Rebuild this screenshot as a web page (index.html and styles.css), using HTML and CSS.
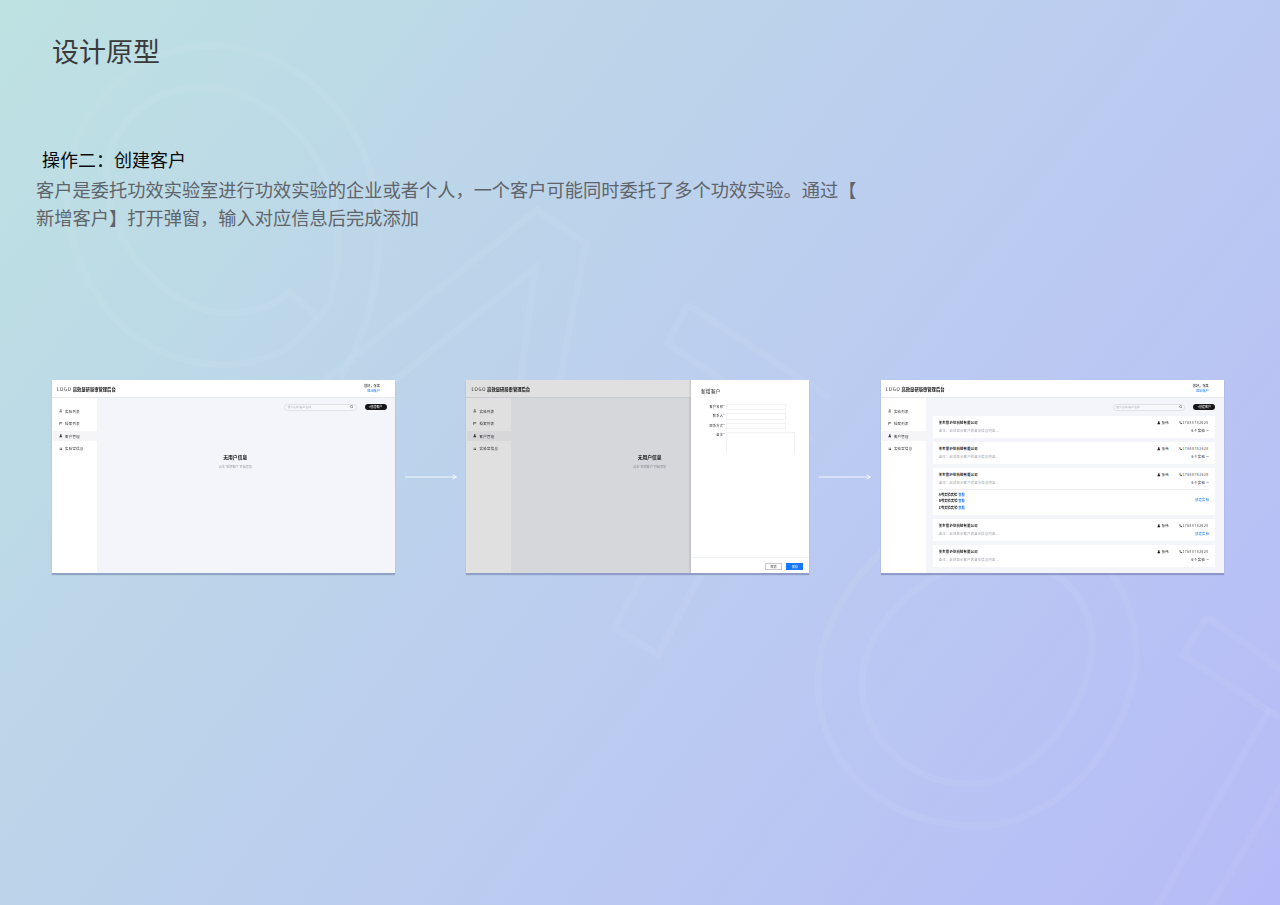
FILE: index.html
```html
<!DOCTYPE html>
<html lang="zh-CN">
<head>
<meta charset="utf-8">
<title>设计原型</title>
<link rel="stylesheet" href="styles.css">
</head>
<body>
<svg class="decor" viewBox="0 0 1280 905" aria-hidden="true">
  <g class="decor-lines">
    <path d="M318 318 L292 345 C250 372 190 372 140 340 C85 300 58 230 70 165 C84 90 150 42 220 46 C300 52 372 120 378 215 C382 270 370 330 340 378"/>
    <path d="M318 318 L290 292 C262 316 215 322 175 296 C128 264 100 210 108 160 C118 112 165 82 215 88 C280 96 335 160 338 230 C340 270 330 310 318 318"/>
    <path d="M300 400 L537 210 L586 243 L552 420"/>
    <path d="M395 380 L535 268 L518 400"/>
    <path d="M688 305 L667 343 L812 440 M688 305 L830 398"/>
    <path d="M708 560 L658 655 L615 628 L655 550"/>
    <path d="M1000 510 C1090 520 1140 590 1136 660 C1130 740 1060 828 972 826 C880 824 816 760 818 680 C820 600 900 500 1000 510Z"/>
    <path d="M1000 560 C1060 560 1094 600 1092 650 C1088 710 1030 786 968 784 C900 782 860 730 862 680 C866 620 930 560 1000 560Z"/>
    <path d="M1207 617 L1183 655 L1280 718 M1207 617 L1285 672"/>
    <path d="M1270 708 L1155 910 M1285 780 L1208 910"/>
  </g>
</svg>

<svg class="defs" aria-hidden="true">
  <symbol id="i-doc" viewBox="0 0 10 10"><circle cx="5" cy="3" r="2" fill="none" stroke="currentColor" stroke-width="1.2"/><path d="M1 9.2h8M2 9V7h6v2" fill="none" stroke="currentColor" stroke-width="1.2"/></symbol>
  <symbol id="i-file" viewBox="0 0 10 10"><path d="M1 9V1.5h8M3 1.5V6M5 1.5V4M7.5 1.5V5" fill="none" stroke="currentColor" stroke-width="1.2"/></symbol>
  <symbol id="i-user" viewBox="0 0 10 10"><circle cx="5" cy="3" r="2.4" fill="currentColor"/><path d="M.8 9.6c0-3 2-3.8 4.2-3.8s4.200.8 4.200 3.800z" fill="currentColor"/></symbol>
  <symbol id="i-grid" viewBox="0 0 10 10"><path d="M2 2h2.500v2.500H2zM5.500 2H8v2.500H5.500zM2 5.500h2.500V8H2zM5.500 5.500H8V8H5.500z" fill="currentColor"/></symbol>
  <symbol id="i-search" viewBox="0 0 10 10"><circle cx="4.500" cy="4.500" r="3.200" fill="none" stroke="currentColor" stroke-width="1.300"/><path d="M7 7l2.200 2.200" stroke="currentColor" stroke-width="1.300"/></symbol>
  <symbol id="i-phone" viewBox="0 0 10 10"><path d="M1.500 1l2-.5 1.200 2.500-1.200 1c.5 1 1.300 1.800 2.300 2.300l1-1.200L9.300 7l-.5 2C4.500 9.500.6 5.500 1.500 1z" fill="currentColor"/></symbol>
  <symbol id="i-down" viewBox="0 0 10 10"><path d="M1.500 3.200L5 6.800l3.500-3.600" fill="none" stroke="currentColor" stroke-width="1.300"/></symbol>
  <symbol id="i-up" viewBox="0 0 10 10"><path d="M1.500 6.800L5 3.200l3.500 3.600" fill="none" stroke="currentColor" stroke-width="1.300"/></symbol>
</svg>

<h1 class="page-title">设计原型</h1>
<h2 class="step-title">操作二：创建客户</h2>
<p class="step-desc">客户是委托功效实验室进行功效实验的企业或者个人，一个客户可能同时委托了多个功效实验。通过【新增客户】打开弹窗，输入对应信息后完成添加</p>

<section class="stage">

  <!-- 画面一：空状态 -->
  <div class="win">
    <header class="win-head">
      <span class="brand"><b class="logo">LOGO</b> 高效量研局审管理后台</span>
      <span class="account"><span>您好，张某</span><a>退出账户</a></span>
    </header>
    <div class="win-body">
      <nav class="side">
        <a class="nav"><svg class="ico"><use href="#i-doc"/></svg>实验列表</a>
        <a class="nav"><svg class="ico"><use href="#i-file"/></svg>档案列表</a>
        <a class="nav on"><svg class="ico"><use href="#i-user"/></svg>客户管理</a>
        <a class="nav"><svg class="ico"><use href="#i-grid"/></svg>实验室信息</a>
      </nav>
      <main class="main">
        <div class="tools">
          <div class="search"><span>搜索名称/客户名称</span><svg class="ico"><use href="#i-search"/></svg></div>
          <div class="add">+创建客户</div>
        </div>
        <div class="empty"><strong>无用户信息</strong><span>点击"新增客户"开始添加</span></div>
      </main>
    </div>
  </div>

  <div class="arrow"><svg viewBox="0 0 52 6"><path d="M0 3h51M47.500 .8L51.500 3l-4 2.200"/></svg></div>

  <!-- 画面二：新增抽屉 -->
  <div class="win">
    <header class="win-head">
      <span class="brand"><b class="logo">LOGO</b> 高效量研局审管理后台</span>
      <span class="account"><span>您好，张某</span><a>退出账户</a></span>
    </header>
    <div class="win-body">
      <nav class="side">
        <a class="nav"><svg class="ico"><use href="#i-doc"/></svg>实验列表</a>
        <a class="nav"><svg class="ico"><use href="#i-file"/></svg>档案列表</a>
        <a class="nav on"><svg class="ico"><use href="#i-user"/></svg>客户管理</a>
        <a class="nav"><svg class="ico"><use href="#i-grid"/></svg>实验室信息</a>
      </nav>
      <main class="main">
        <div class="tools"></div>
        <div class="empty"><strong>无用户信息</strong><span>点击"新增客户"开始添加</span></div>
      </main>
    </div>
    <div class="mask"></div>
    <aside class="drawer">
      <div class="drawer-title">新增客户</div>
      <div class="form">
        <label class="field"><span>客户名称*</span><i class="input"></i></label>
        <label class="field"><span>联系人*</span><i class="input"></i></label>
        <label class="field"><span>联系方式*</span><i class="input"></i></label>
        <label class="field"><span>备注*</span><i class="textarea"></i></label>
      </div>
      <div class="drawer-foot"><span class="btn">取消</span><span class="btn primary">保存</span></div>
    </aside>
  </div>

  <div class="arrow"><svg viewBox="0 0 52 6"><path d="M0 3h51M47.500 .8L51.500 3l-4 2.200"/></svg></div>

  <!-- 画面三：客户列表 -->
  <div class="win">
    <header class="win-head">
      <span class="brand"><b class="logo">LOGO</b> 高效量研局审管理后台</span>
      <span class="account"><span>您好，张某</span><a>退出账户</a></span>
    </header>
    <div class="win-body">
      <nav class="side">
        <a class="nav"><svg class="ico"><use href="#i-doc"/></svg>实验列表</a>
        <a class="nav"><svg class="ico"><use href="#i-file"/></svg>档案列表</a>
        <a class="nav on"><svg class="ico"><use href="#i-user"/></svg>客户管理</a>
        <a class="nav"><svg class="ico"><use href="#i-grid"/></svg>实验室信息</a>
      </nav>
      <main class="main">
        <div class="tools">
          <div class="search"><span>搜索名称/客户名称</span><svg class="ico"><use href="#i-search"/></svg></div>
          <div class="add">+创建客户</div>
        </div>
        <div class="cards">
          <article class="card">
            <div class="row"><b class="co">美东雷护肤科技有限公司</b><span class="who"><svg class="ico"><use href="#i-user"/></svg>张伟</span><span class="tel"><svg class="ico"><use href="#i-phone"/></svg>17688782628</span></div>
            <div class="row sub"><span class="note">备注：此处显示客户的备注信息内容...</span><span class="more">6个实验<svg class="ico"><use href="#i-down"/></svg></span></div>
          </article>
          <article class="card">
            <div class="row"><b class="co">美东雷护肤科技有限公司</b><span class="who"><svg class="ico"><use href="#i-user"/></svg>张伟</span><span class="tel"><svg class="ico"><use href="#i-phone"/></svg>17688782628</span></div>
            <div class="row sub"><span class="note">备注：此处显示客户的备注信息内容...</span><span class="more">6个实验<svg class="ico"><use href="#i-down"/></svg></span></div>
          </article>
          <article class="card">
            <div class="row"><b class="co">美东雷护肤科技有限公司</b><span class="who"><svg class="ico"><use href="#i-user"/></svg>张伟</span><span class="tel"><svg class="ico"><use href="#i-phone"/></svg>17688782628</span></div>
            <div class="row sub"><span class="note">备注：此处显示客户的备注信息内容...</span><span class="more">6个实验<svg class="ico"><use href="#i-up"/></svg></span></div>
            <div class="detail">
              <ul class="labs">
                <li>A号实验实验 <a>查看</a></li>
                <li>B号实验实验 <a>查看</a></li>
                <li>C号实验实验 <a>查看</a></li>
              </ul>
              <a class="create">创建实验</a>
            </div>
          </article>
          <article class="card">
            <div class="row"><b class="co">美东雷护肤科技有限公司</b><span class="who"><svg class="ico"><use href="#i-user"/></svg>张伟</span><span class="tel"><svg class="ico"><use href="#i-phone"/></svg>17688782628</span></div>
            <div class="row sub"><span class="note">备注：此处显示客户的备注信息内容...</span><a class="create">创建实验</a></div>
          </article>
          <article class="card">
            <div class="row"><b class="co">美东雷护肤科技有限公司</b><span class="who"><svg class="ico"><use href="#i-user"/></svg>张伟</span><span class="tel"><svg class="ico"><use href="#i-phone"/></svg>17688782628</span></div>
            <div class="row sub"><span class="note">备注：此处显示客户的备注信息内容...</span><span class="more">6个实验<svg class="ico"><use href="#i-down"/></svg></span></div>
          </article>
        </div>
      </main>
    </div>
  </div>

</section>
</body>
</html>
```
FILE: styles.css
```css
* { box-sizing: border-box; }
html, body { margin: 0; height: 100%; }
body {
  position: relative;
  width: 1280px;
  height: 905px;
  overflow: hidden;
  font-family: "Noto Sans CJK SC", "Noto Sans", "Liberation Sans", sans-serif;
  background: linear-gradient(128deg, #bee2e2 0%, #bcd4ea 35%, #bccdf0 55%, #b6bbf7 100%);
}
.decor { position: absolute; inset: 0; width: 1280px; height: 905px; }
.decor-lines { fill: none; stroke: #fff; stroke-opacity: .055; stroke-width: 7; }
.defs { position: absolute; width: 0; height: 0; }

.page-title, .step-title, .step-desc { position: relative; margin: 0; font-weight: 400; }
.page-title { padding: 33px 0 0 52px; font-size: 27px; line-height: 36px; color: #3a3a3a; }
.step-title { margin-top: 76px; padding-left: 42px; font-size: 18px; line-height: 28px; color: #0a0a0a; }
.step-desc { margin-top: 2px; padding-left: 36px; width: 866px; font-size: 18.24px; line-height: 28px; line-break: anywhere; color: #5f646b; }

.stage { position: relative; display: flex; align-items: center; margin-top: 149px; padding-left: 52px; }
.arrow { display: flex; justify-content: center; width: 71.400px; }
.arrow svg { width: 52px; height: 6px; fill: none; stroke: #fff; stroke-width: .8; }

.win {
  position: relative;
  display: flex;
  flex-direction: column;
  flex: none;
  width: 343px;
  height: 193px;
  overflow: hidden;
  background: #fff;
  color: #111;
  filter: blur(.3px);
  box-shadow: 0 2px 1px rgba(80, 90, 140, .4);
}
.win-head {
  display: flex;
  flex: none;
  justify-content: space-between;
  align-items: center;
  height: 18px;
  padding: 0 15px 0 5px;
  border-bottom: 1px solid #e6e8ef;
  font-size: 4.300px;
}
.brand { font-weight: 700; white-space: nowrap; }
.logo { font-weight: 400; letter-spacing: .8px; }
.account { display: flex; flex-direction: column; align-items: flex-end; font-size: 3.200px; line-height: 4.600px; }
.account a { color: #1677ff; }
.win-body { display: flex; flex: 1; min-height: 0; }

.side { flex: none; width: 45px; padding: 8px 0 0 1px; }
.nav { display: flex; align-items: center; gap: 2.500px; height: 10px; margin-bottom: 2.600px; padding-left: 6px; font-size: 3.400px; letter-spacing: .35px; color: #333; white-space: nowrap; }
.nav.on { background: #f5f5f7; }
.ico { flex: none; width: 3.600px; height: 3.600px; }

.main { flex: 1; min-width: 0; padding: 5.700px 8.500px 0 7px; background: #f4f5fa; }
.tools { display: flex; justify-content: flex-end; align-items: center; gap: 8px; height: 7px; }
.search {
  display: flex;
  justify-content: space-between;
  align-items: center;
  width: 72.500px;
  height: 7px;
  padding: 0 2px 0 2.500px;
  border: .5px solid #dfe1e8;
  border-radius: 4px;
  background: #f7f8fb;
  font-size: 2.800px;
  color: #a8abb3;
}
.search .ico { color: #555; }
.add {
  width: 22px;
  height: 6px;
  border-radius: 3px;
  background: #15151a;
  font-size: 3px;
  line-height: 6px;
  text-align: center;
  color: #fff;
  box-shadow: 0 0 2px #fff;
}
.empty { display: flex; flex-direction: column; align-items: center; gap: 5.500px; margin-top: 43px; padding-right: 20px; }
.empty strong { font-size: 4.800px; line-height: 6px; font-weight: 700; }
.empty span { font-size: 3px; line-height: 4px; color: #9a9da5; }

.mask { position: absolute; inset: 0; background: rgba(0, 0, 0, .12); }
.drawer {
  position: absolute;
  top: 0;
  right: 0;
  bottom: 0;
  display: flex;
  flex-direction: column;
  width: 118.500px;
  background: #fff;
  box-shadow: -1px 0 2px rgba(0, 0, 0, .15);
}
.drawer-title { padding: 8px 0 0 10px; font-size: 4.800px; line-height: 6px; letter-spacing: .1px; color: #111; }
.form { display: flex; flex-direction: column; gap: 3.200px; margin-top: 10px; }
.field { display: flex; align-items: flex-start; }
.field span { width: 35px; padding-right: 1px; font-size: 3.200px; line-height: 5.500px; letter-spacing: .25px; text-align: right; color: #333; }
.input { display: block; width: 60px; height: 6.200px; border: .5px solid #f1f2f5; }
.textarea { display: block; width: 69px; height: 22px; border: .5px solid #f1f2f5; border-bottom-color: transparent; }
.drawer-foot { display: flex; justify-content: flex-end; gap: 4.500px; margin-top: auto; height: 16px; padding: 5px 6px 0 0; border-top: 1px solid #f1f2f5; }
.btn { width: 17px; height: 7px; font-size: 3px; line-height: 6.500px; text-align: center; border: .5px solid #c9c9c9; color: #333; }
.btn.primary { background: #1677ff; border-color: #1677ff; color: #fff; }

.cards { display: flex; flex-direction: column; gap: 4px; margin-top: 5.300px; }
.card { padding: 4px 6px 0; min-height: 22px; background: #fff; }
.row { display: flex; align-items: center; height: 6px; font-size: 3.300px; letter-spacing: .25px; }
.row.sub { margin-top: 2px; height: 6px; }
.co { margin-right: auto; font-weight: 700; }
.who { display: flex; align-items: center; gap: 1px; width: 21.700px; }
.tel { display: flex; align-items: center; width: 30.400px; letter-spacing: .55px; color: #444; }
.note { margin-right: auto; color: #9ea1a8; }
.more { display: flex; align-items: center; gap: 1px; letter-spacing: .5px; }
.more .ico { width: 3px; height: 3px; }
.detail { display: flex; justify-content: space-between; align-items: center; margin-top: 2.700px; padding: 2px 0 3px; border-top: .6px solid #eceef2; }
.labs { margin: 0; padding: 0; list-style: none; font-size: 3.300px; line-height: 6.700px; font-weight: 700; }
.labs a { color: #1677ff; }
.create { font-size: 3.300px; letter-spacing: .3px; color: #1677ff; }
.detail .create { margin-bottom: 5px; }
```
